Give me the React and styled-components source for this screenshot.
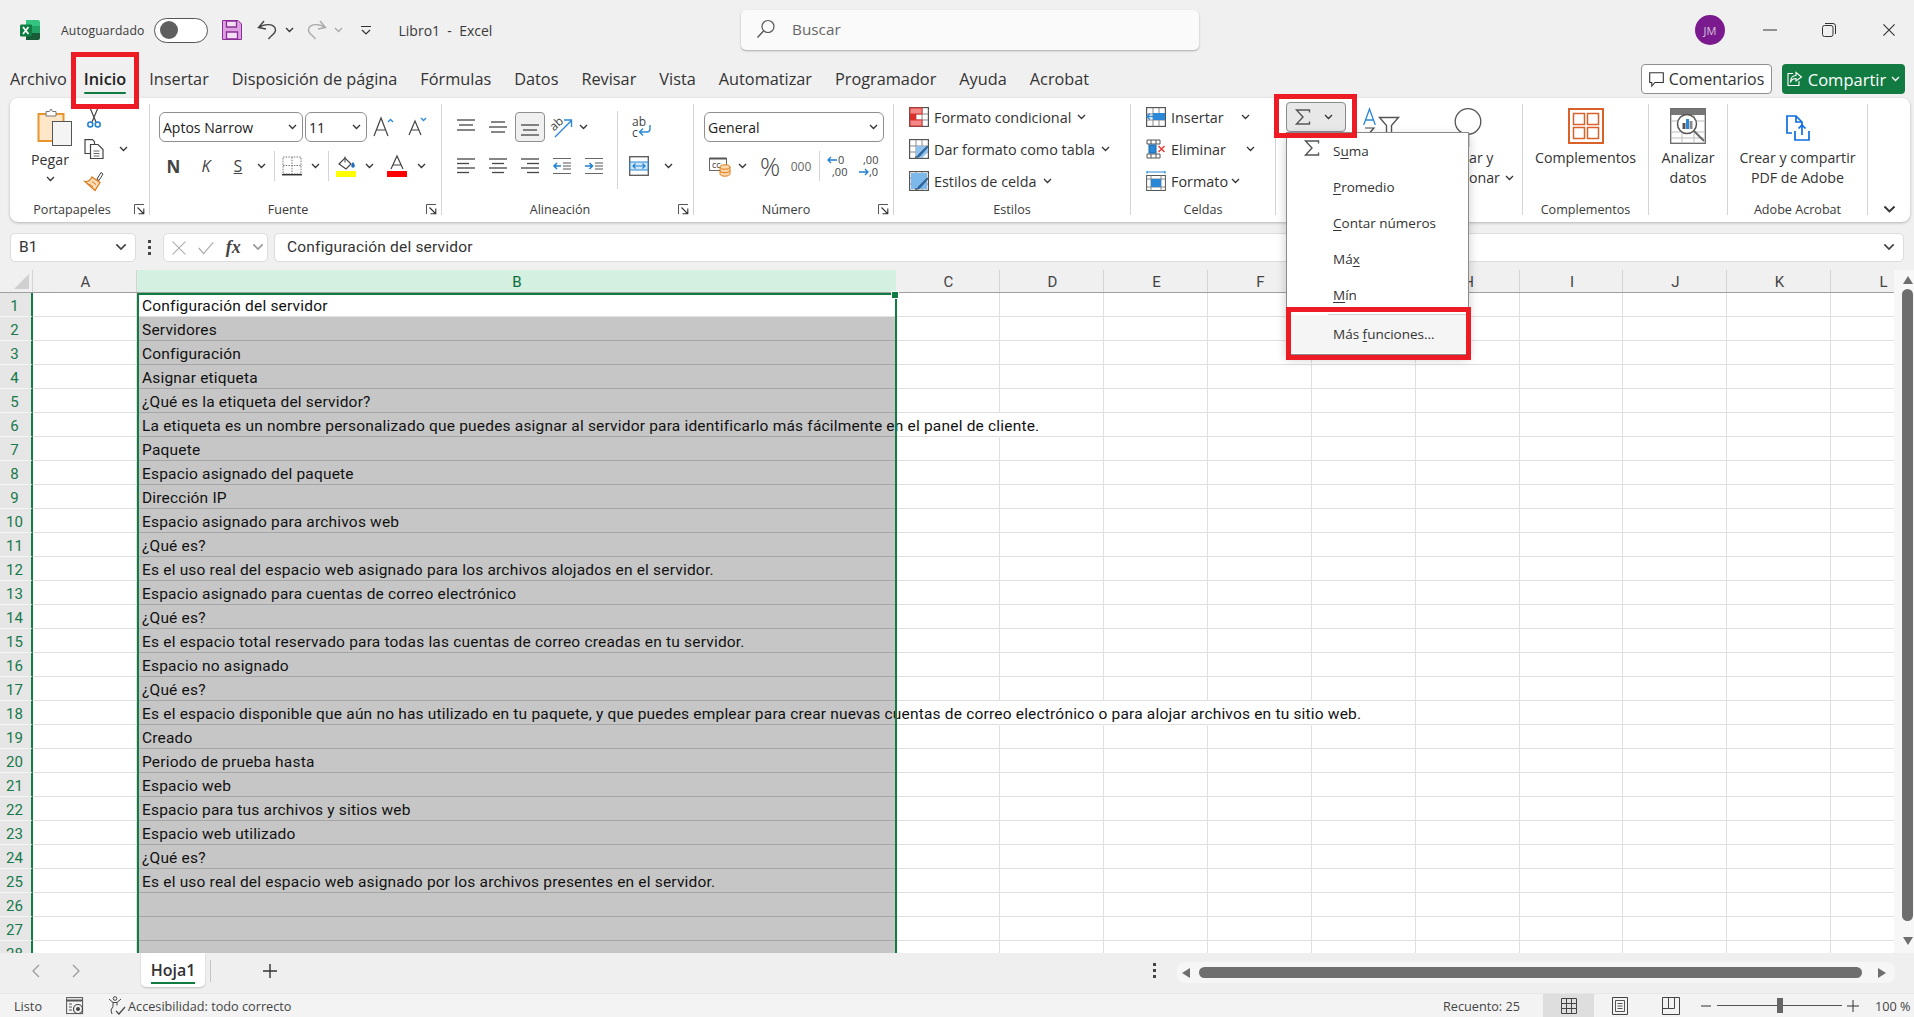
import styled, { createGlobalStyle } from "styled-components";

const UI = `"Open Sans", "Noto Sans", sans-serif`;
const CELL = `Roboto, "Liberation Sans", sans-serif`;
const GREEN = "#107c41";

const GlobalStyle = createGlobalStyle`
  html, body { margin: 0; padding: 0; background: #f0f0f0; }
  * { box-sizing: border-box; }
`;

const Page = styled.div`
  position: relative;
  width: 1914px;
  height: 1017px;
  overflow: hidden;
  background: #f0f0f0;
  color: #333;
  font-family: ${UI};
  display: flex;
  flex-direction: column;
`;

/* ---------- icons ---------- */
const Svg = ({ w, h = w, vb, children }) => (
  <svg width={w} height={h} viewBox={vb || `0 0 ${w} ${h}`} fill="none" overflow="visible">
    {children}
  </svg>
);

const Chevron = ({ c = "#333", s = 9 }) => (
  <Svg w={s} h={s * 0.67} vb="0 0 9 6">
    <path d="M1 1l3.5 3.5L8 1" stroke={c} strokeWidth="1.3" />
  </Svg>
);

const ExcelLogo = () => (
  <Svg w={20}>
    <path d="M6 0h12a2 2 0 0 1 2 2v4H6z" fill="#33c481" />
    <path d="M6 6h14v7H6z" fill="#21a366" />
    <path d="M6 13h14v5a2 2 0 0 1-2 2H6z" fill="#185c37" />
    <rect x="0" y="4.5" width="12" height="12" rx="1.2" fill={GREEN} />
    <path d="M3 7l5.5 7M8.5 7L3 14" stroke="#fff" strokeWidth="1.7" />
  </Svg>
);

const SaveIcon = () => (
  <Svg w={20}>
    <path d="M.5.5h15.5l3.5 3.5v15.5H.5z" fill="#dc9fdf" stroke="#8a2c97" />
    <path d="M4.5 1h10v6h-10zM4.5 12h11v7h-11z" fill="#f3dff4" stroke="#8a2c97" strokeWidth="1.3" />
  </Svg>
);

const UndoIcon = ({ c = "#444" }) => (
  <Svg w={20}>
    <path d="M7 1L1.5 7.5l7.5 1.5M2 7.5C7 3.5 18 3 18.5 10c.2 3.5-5 6-7 9" stroke={c} strokeWidth="1.4" />
  </Svg>
);

const RedoIcon = () => (
  <Svg w={20}>
    <path d="M13 1l5.5 6.5L11 9M18 7.5C13 3.5 2 3 1.5 10c-.2 3.5 5 6 7 9" stroke="#a9a9a9" strokeWidth="1.4" />
  </Svg>
);

const CustomizeIcon = () => (
  <Svg w={12}>
    <path d="M1 2.5h10M2 6l4 4 4-4" stroke="#333" strokeWidth="1.2" />
  </Svg>
);

const SearchIcon = () => (
  <Svg w={20}>
    <circle cx="12" cy="7.5" r="6" stroke="#555" strokeWidth="1.2" />
    <path d="M7.5 12L1.5 18.5" stroke="#555" strokeWidth="1.3" />
  </Svg>
);

const CommentIcon = () => (
  <Svg w={15}>
    <path d="M.7.7h13.6v9.8H6L2.8 14v-3.5H.7z" stroke="#333" strokeWidth="1.1" />
  </Svg>
);

const ShareIcon = () => (
  <Svg w={16}>
    <path d="M9 1.5l5.5 4.5L9 10V7.5C5.5 7.5 4 9.5 3.5 11.5 3.5 6.5 6 4.5 9 4.5z" stroke="#fff" strokeWidth="1.1" />
    <path d="M6 2.5H1v12h11V10" stroke="#fff" strokeWidth="1.1" />
  </Svg>
);

const PasteIcon = () => (
  <Svg w={35} h={38}>
    <rect x="1.5" y="6" width="25" height="27" fill="#fde7c8" stroke="#e9952f" strokeWidth="2" />
    <path d="M9 6V3.5h3.5L14 1l1.5 2.5H19V8H9z" fill="#fff" stroke="#777" />
    <rect x="15.5" y="13.5" width="19" height="24" fill="#f4f4f4" stroke="#555" />
  </Svg>
);

const ScissorsIcon = () => (
  <Svg w={14} h={20}>
    <path d="M3.5 1l5.5 13M10.5 1L5 14" stroke="#444" strokeWidth="1.2" />
    <circle cx="3.3" cy="16.5" r="2.5" stroke="#1f7fd0" strokeWidth="1.5" />
    <circle cx="10.7" cy="16.5" r="2.5" stroke="#1f7fd0" strokeWidth="1.5" />
  </Svg>
);

const CopyIcon = () => (
  <Svg w={20}>
    <path d="M7 14.5H1V.7h7.5l2 2v3" stroke="#444" strokeWidth="1.2" />
    <path d="M6.5 5.5H14l5 5v9H6.5z" fill="#fff" stroke="#444" strokeWidth="1.2" />
    <path d="M9.5 12h6M9.5 14.5h6M9.5 17h6" stroke="#666" />
  </Svg>
);

const BrushIcon = () => (
  <Svg w={20}>
    <path d="M13 8l4-6.5 2 1.5-4 6.5z" stroke="#444" />
    <path d="M8 6l8 5.5-5 8L1 10.5c3 .3 5.5-1.5 7-4.5z" fill="#fbdcb4" stroke="#dd7a1c" strokeWidth="1.3" />
    <path d="M5 13l4 3M8 10.5l4 3" stroke="#dd7a1c" />
  </Svg>
);

const GrowIcon = ({ shrink }) => (
  <Svg w={20} h={22}>
    <path d={shrink ? "M1 19L7 5l6 14M3.2 14h7.6" : "M0 20L7 2l7 18M2.6 14h8.8"} stroke="#444" strokeWidth="1.2" />
    <path d={shrink ? "M13 2l2.5 2.5L18 2" : "M14 6l2.5-2.5L19 6"} stroke="#2b88d8" strokeWidth="1.3" />
  </Svg>
);

const BordersIcon = () => (
  <Svg w={20}>
    <path d="M1 1h18v17H1zM10 1v17M1 9.5h18" stroke="#777" strokeDasharray="1.5 1.2" />
    <path d="M0 18.7h20" stroke="#333" strokeWidth="1.5" />
  </Svg>
);

const FillIcon = () => (
  <Svg w={20} h={22}>
    <path d="M3 9l6-6 6 6-5 5z" stroke="#444" strokeWidth="1.2" />
    <path d="M9 1.5v6" stroke="#444" />
    <path d="M17 7c-1.5 2-1.8 3-1.8 4a1.8 1.8 0 0 0 3.6 0c0-1-.3-2-1.8-4z" fill="#1f6fc0" />
    <rect y="16" width="20" height="6" fill="#ffff00" />
  </Svg>
);

const FontColorIcon = () => (
  <Svg w={20} h={22}>
    <path d="M4 14L10 1l6 13M6 10h8" stroke="#444" strokeWidth="1.2" />
    <rect y="16" width="20" height="6" fill="#ff0000" />
  </Svg>
);

const AlignLines = ({ lines }) => (
  <Svg w={18} h={18}>
    {lines.map(([a, b, y], i) => (
      <path key={i} d={`M${a} ${y}H${b}`} stroke="#444" strokeWidth="1.3" />
    ))}
  </Svg>
);

const IndentIcon = ({ right }) => (
  <Svg w={18} h={18}>
    <path d="M0 1.5h18M0 16.5h18" stroke="#666" strokeWidth="1.2" />
    <path d={right ? "M0 9h7M4.5 6L7.5 9l-3 3" : "M8 9H1M4 6L1 9l3 3"} stroke="#1f7fd0" strokeWidth="1.5" />
    <path d="M10 6h8M10 9h8M10 12h8" stroke="#555" />
  </Svg>
);

const OrientIcon = () => (
  <Svg w={22} h={22}>
    <text x="0" y="12" fontFamily={UI} fontSize="12" fill="#444" transform="rotate(-42 6 10)">ab</text>
    <path d="M4 21L20 5M13 4h7.5v7" stroke="#2b88d8" strokeWidth="1.4" />
  </Svg>
);

const WrapIcon = () => (
  <Svg w={20} h={22}>
    <text fontFamily={UI} fontSize="12" fill="#444">
      <tspan x="0" y="10">ab</tspan>
      <tspan x="0" y="21">c</tspan>
    </text>
    <path d="M18 9v4a3 3 0 0 1-3 3H8M11 12.5L7.5 16l3.5 3.5" stroke="#2b88d8" strokeWidth="1.4" />
  </Svg>
);

const MergeIcon = () => (
  <Svg w={20}>
    <rect x=".7" y=".7" width="18.6" height="18.6" fill="#fff" stroke="#555" strokeWidth="1.3" />
    <rect x="1" y="6" width="18" height="8" fill="#cfe6f8" stroke="#2b88d8" />
    <path d="M4 10h12M6.5 7.5L4 10l2.5 2.5M13.5 7.5L16 10l-2.5 2.5" stroke="#1f7fd0" strokeWidth="1.2" />
  </Svg>
);

const CurrencyIcon = () => (
  <Svg w={22} h={22}>
    <rect x=".5" y="3.5" width="17" height="12" fill="#fff" stroke="#666" />
    <path d="M.5 3.5h17" stroke="#555" strokeWidth="2" />
    <text x="3" y="13" fontFamily={UI} fontSize="9" fill="#444">cc</text>
    <path d="M11 12v7c0 1.2 2.2 2.2 5 2.2s5-1 5-2.2v-7M11 15.5c0 1.2 2.2 2.2 5 2.2s5-1 5-2.2" fill="#fbd9ae" stroke="#e07b16" />
    <ellipse cx="16" cy="12" rx="5" ry="2.2" fill="#fbd9ae" stroke="#e07b16" />
  </Svg>
);

const DecimalIcon = ({ more }) => (
  <Svg w={21} h={24}>
    {more ? (
      <>
        <path d="M10 6H1M4 3L1 6l3 3" stroke="#1f7fd0" strokeWidth="1.3" />
        <text fontFamily={UI} fontSize="11" fill="#444">
          <tspan x="11" y="10">0</tspan>
          <tspan x="5" y="22">,00</tspan>
        </text>
      </>
    ) : (
      <>
        <path d="M1 18h9M7 15l3 3-3 3" stroke="#1f7fd0" strokeWidth="1.3" />
        <text fontFamily={UI} fontSize="11" fill="#444">
          <tspan x="5" y="10">,00</tspan>
          <tspan x="11" y="22">,0</tspan>
        </text>
      </>
    )}
  </Svg>
);

const CellGrid = ({ children, brush }) => (
  <Svg w={20}>
    <rect x=".6" y=".6" width="18.8" height="18.8" fill="#fff" stroke="#555" strokeWidth="1.2" />
    <path d="M7 1v18M13 1v18M1 7h18M1 13h18" stroke="#888" />
    {children}
    {brush && <path d="M6 18c2 0 3-1 3.5-2.5L18 7l1 1-8 9c-1.5 1.5-3 1.5-5 1z" fill="#1f6fc0" stroke="#444" strokeWidth=".6" />}
  </Svg>
);

const CondIcon = () => (
  <CellGrid>
    <rect x="1" y="1" width="12" height="6" fill="#f28a8a" stroke="#d9302a" />
    <rect x="1" y="13" width="12" height="6" fill="#f28a8a" stroke="#d9302a" />
    <rect x="1" y="7" width="6" height="6" fill="#d9302a" />
  </CellGrid>
);
const TableIcon = () => (
  <CellGrid brush>
    <path d="M7 7h12v6l-6 6H7z" fill="#8fc3ee" />
  </CellGrid>
);
const StyleIcon = () => (
  <CellGrid brush>
    <rect x="2" y="2" width="16" height="16" fill="#7db8ea" />
  </CellGrid>
);
const InsertIcon = () => (
  <CellGrid>
    <rect x="7" y="6" width="12" height="7" fill="#2b88d8" />
    <path d="M9 9.5H1M4 6.5L1 9.5l3 3" stroke="#2b88d8" strokeWidth="1.3" />
  </CellGrid>
);
const DeleteIcon = () => (
  <Svg w={20}>
    <path d="M1 1h13v4H1zM1 15h13v4H1zM5 1v4M10 1v4M5 15v4M10 15v4" stroke="#555" />
    <rect x="3" y="6" width="7" height="8" fill="#2b88d8" stroke="#1a64a8" />
    <path d="M12.5 7l6 6M18.5 7l-6 6" stroke="#e8403a" strokeWidth="1.5" />
  </Svg>
);
const FormatIcon = () => (
  <Svg w={20}>
    <path d="M1 1h18M1 0v2.5M19 0v2.5" stroke="#2b88d8" strokeWidth="1.2" />
    <rect x=".6" y="4.5" width="18.8" height="15" fill="#fff" stroke="#555" />
    <path d="M5 4.5v15M15 4.5v15M1 8h18M1 16h18" stroke="#888" />
    <rect x="5" y="8" width="10" height="8" fill="#2b88d8" />
  </Svg>
);

const SigmaIcon = ({ s = 16 }) => (
  <Svg w={s} h={s} vb="0 0 16 16">
    <path d="M14.5 3.5V1H1.5l6.500 7-6.500 7h13v-2.500" stroke="#555" strokeWidth="1.4" />
  </Svg>
);

const SortIcon = () => (
  <Svg w={38} h={36}>
    <path d="M.7 19L6.500 3l5.800 16M2.600 14h7.800" stroke="#2b88d8" strokeWidth="1.3" />
    <path d="M2 22h9l-9 10h9" stroke="#444" strokeWidth="1.2" />
    <path d="M16.5 11.5h19l-7 8v10h-5v-10z" fill="#fff" stroke="#555" strokeWidth="1.4" />
  </Svg>
);

const FindIcon = () => (
  <Svg w={28} h={40}>
    <circle cx="14" cy="13.5" r="12.8" fill="#fff" stroke="#555" strokeWidth="1.3" />
    <path d="M14 26.5V39" stroke="#555" strokeWidth="2.5" />
  </Svg>
);

const AddinsIcon = () => (
  <Svg w={36}>
    <rect x="1" y="1" width="34" height="34" fill="#fff" stroke="#d9622b" strokeWidth="2" />
    <rect x="5.5" y="5.5" width="11" height="11" fill="#fff" stroke="#d9622b" strokeWidth="1.5" />
    <rect x="19.5" y="5.5" width="11" height="11" fill="#fff" stroke="#d9622b" strokeWidth="1.5" />
    <rect x="5.5" y="19.5" width="11" height="11" fill="#fff" stroke="#d9622b" strokeWidth="1.5" />
    <rect x="19.5" y="19.5" width="11" height="11" fill="#fff" stroke="#d9622b" strokeWidth="1.5" />
  </Svg>
);

const AnalyzeIcon = () => (
  <Svg w={36}>
    <rect x=".7" y=".7" width="34.6" height="34.6" fill="#fff" stroke="#666" strokeWidth="1.3" />
    <rect x="1" y="1" width="34" height="6" fill="#777" />
    <path d="M12 7v28M24 7v28M1 13h34M1 24h34M1 30h34" stroke="#bbb" />
    <circle cx="17" cy="16" r="9.5" fill="#fff" stroke="#555" strokeWidth="1.5" />
    <path d="M24 23l10 10" stroke="#666" strokeWidth="2" />
    <rect x="12.5" y="15" width="3" height="6" fill="#555" />
    <rect x="16" y="11" width="3" height="10" fill="#2b88d8" />
    <rect x="19.5" y="13" width="3" height="8" fill="#8a8a8a" />
  </Svg>
);

const AdobeIcon = () => (
  <Svg w={24} h={26}>
    <path d="M6 18H1V1h9l6 6v4M10 1v6h6" stroke="#0f6fe0" strokeWidth="1.7" />
    <path d="M9 16v9h14v-9M16 20V10M12.5 13.5L16 10l3.5 3.5" stroke="#0f6fe0" strokeWidth="1.7" />
  </Svg>
);

const Launcher = () => (
  <Svg w={11}>
    <path d="M.5 10V.5H10" stroke="#555" />
    <path d="M3.5 3.5l6 6M4.5 9.8h5.300V4.5" stroke="#333" strokeWidth="1.1" />
  </Svg>
);

const XMark = ({ s = 20, c = "#aaa", w = 1.3 }) => (
  <Svg w={s} vb="0 0 20 20">
    <path d="M2 2l16 16M18 2L2 18" stroke={c} strokeWidth={w} />
  </Svg>
);

const MacroIcon = () => (
  <Svg w={18}>
    <rect x=".6" y=".6" width="16" height="16" stroke="#555" />
    <path d="M.6 3.5h16" stroke="#555" strokeWidth="2" />
    <path d="M3 7h3M3 10h3M3 13h3" stroke="#555" />
    <circle cx="12" cy="12" r="4.5" fill="#f3f3f3" stroke="#444" strokeWidth="1.2" />
    <circle cx="12" cy="12" r="2" fill="#444" />
  </Svg>
);

const AccessIcon = () => (
  <Svg w={18} h={20}>
    <circle cx="7" cy="2.5" r="1.8" stroke="#444" />
    <path d="M1 3l4 3.5h4L13 3M5 6.5v4L3 14l1 4M9 6.5v3" stroke="#444" />
    <path d="M8 15l3 3 6-7" stroke="#444" strokeWidth="1.2" />
  </Svg>
);

const NormalViewIcon = () => (
  <Svg w={16}>
    <path d="M.5.5h15v15H.5zM5.5.5v15M10.5.5v15M.5 5.5h15M.5 10.5h15" stroke="#444" />
  </Svg>
);
const PageViewIcon = () => (
  <Svg w={16} h={18}>
    <path d="M.5.5h15v17H.5z" stroke="#444" />
    <path d="M3.5 3.5h9v11h-9zM5.5 6.5h5M5.5 9h5M5.5 11.5h5" stroke="#555" />
  </Svg>
);
const BreakViewIcon = () => (
  <Svg w={18} h={18}>
    <path d="M.5.5h17v17H.5zM.5 11.5h6V.5M6.5 11.5h6V.5" stroke="#444" />
  </Svg>
);

/* ---------- title bar ---------- */
const TitleBar = styled.header`
  height: 60px;
  flex: none;
  display: flex;
  align-items: center;
`;
const TitleLeft = styled.div`
  width: 741px;
  flex: none;
  display: flex;
  align-items: center;
  padding-left: 20px;
`;
const TitleItem = styled.span`
  display: inline-flex;
  align-items: center;
  margin-left: ${(p) => p.$ml || 0}px;
`;
const AutoSave = styled.span`
  margin-left: 21px;
  font-size: 12.2px;
  letter-spacing: 0.15px;
  color: #3a3a3a;
`;
const Toggle = styled.span`
  margin-left: 9px;
  width: 54px;
  height: 25px;
  border: 1px solid #555;
  border-radius: 13px;
  background: #fff;
  display: flex;
  align-items: center;
  padding-left: 5px;
  &::before {
    content: "";
    width: 18px;
    height: 18px;
    border-radius: 50%;
    background: #5f5f5f;
  }
`;
const DocTitle = styled.span`
  margin-left: 27px;
  font-size: 14px;
  color: #3a3a3a;
  white-space: pre;
`;
const SearchBox = styled.div`
  width: 458px;
  height: 40px;
  flex: none;
  background: #fafafa;
  border-radius: 5px;
  box-shadow: 0 1px 2px rgba(0, 0, 0, 0.3);
  display: flex;
  align-items: center;
  gap: 16px;
  padding: 0 0 2px 15px;
  font-size: 15.3px;
  color: #666;
`;
const TitleRight = styled.div`
  flex: 1;
  display: flex;
  align-items: center;
  justify-content: flex-end;
`;
const Avatar = styled.span`
  width: 30px;
  height: 30px;
  border-radius: 50%;
  background: #7a1a8e;
  color: #d9c2de;
  font-size: 11px;
  display: flex;
  align-items: center;
  justify-content: center;
  margin-right: 15px;
`;
const WinButton = styled.span`
  width: ${(p) => p.$w}px;
  height: 40px;
  margin-left: ${(p) => p.$ml || 0}px;
  display: flex;
  align-items: center;
  justify-content: center;
`;

/* ---------- tab row ---------- */
const TabRow = styled.nav`
  height: 38px;
  flex: none;
  display: flex;
  align-items: center;
  padding: 0 9px 0 10px;
`;
const Tab = styled.span`
  position: relative;
  margin-right: ${(p) => p.$mr ?? 23}px;
  font-size: 16.3px;
  font-weight: ${(p) => (p.$active ? 600 : 400)};
  color: ${(p) => (p.$active ? "#222" : "#333")};
  white-space: nowrap;
  ${(p) =>
    p.$active &&
    `&::after {
      content: "";
      position: absolute;
      left: 0;
      right: 0;
      bottom: -4px;
      height: 2.5px;
      background: ${GREEN};
      border-radius: 2px;
    }`}
`;
const TabSpacer = styled.span`
  flex: 1;
`;
const CommentButton = styled.span`
  width: 131px;
  height: 30px;
  display: flex;
  align-items: center;
  justify-content: center;
  gap: 5px;
  background: #fff;
  border: 1px solid #8f8f8f;
  border-radius: 4px;
  font-size: 16px;
`;
const ShareButton = styled.span`
  width: 123px;
  height: 30px;
  margin-left: 10px;
  display: flex;
  align-items: center;
  justify-content: center;
  gap: 5px;
  background: #127b42;
  border-radius: 4px;
  color: #fff;
  font-size: 16.5px;
`;

/* ---------- ribbon ---------- */
const Ribbon = styled.section`
  height: 124px;
  flex: none;
  margin: 0 4px 0 10px;
  padding-top: 6px;
  display: flex;
  background: #fff;
  border-radius: 8px;
  box-shadow: 0 1px 3px rgba(0, 0, 0, 0.25);
`;
const Group = styled.div`
  width: ${(p) => p.$w}px;
  height: 111px;
  flex: ${(p) => (p.$w ? "none" : 1)};
  display: flex;
  flex-direction: column;
  border-right: ${(p) => (p.$last ? "none" : "1px solid #d4d4d4")};
`;
const GroupBody = styled.div`
  height: 97px;
  flex: none;
  display: flex;
  margin-top: ${(p) => p.$top || 0}px;
  margin-bottom: ${(p) => -(p.$top || 0)}px;
  padding-left: ${(p) => p.$left || 0}px;
`;
const GroupFoot = styled.div`
  height: 20px;
  display: flex;
  align-items: center;
  padding-right: ${(p) => (p.$launcher ? 4 : 0)}px;
`;
const GroupLabel = styled.span`
  flex: 1;
  text-align: center;
  font-size: 12.6px;
  color: #3a3a3a;
`;
const Stack = styled.div`
  width: ${(p) => (p.$w ? `${p.$w}px` : "auto")};
  flex: none;
  display: flex;
  flex-direction: column;
  padding-top: ${(p) => p.$top || 0}px;
  margin-top: ${(p) => p.$mt || 0}px;
  gap: ${(p) => p.$gap || 0}px;
`;
const Line = styled.div`
  display: flex;
  align-items: center;
  height: ${(p) => p.$h || 30}px;
`;
const Slot = styled.span`
  width: ${(p) => p.$w}px;
  height: 100%;
  flex: none;
  display: inline-flex;
  align-items: center;
  justify-content: center;
  margin-left: ${(p) => p.$ml || 0}px;
  ${(p) =>
    p.$on &&
    `
    height: 30px;
    background: #f0f0f0;
    border: 1px solid #8f8f8f;
    border-radius: 4px;
  `}
`;
const BigCol = styled.div`
  width: ${(p) => p.$w}px;
  flex: none;
  display: flex;
  flex-direction: column;
  align-items: center;
  padding-top: 4px;
  margin-top: ${(p) => p.$mt || 0}px;
  margin-left: ${(p) => p.$ml || 0}px;
`;
const BigIcon = styled.div`
  height: ${(p) => p.$h || 40}px;
  flex: none;
  display: flex;
  align-items: flex-start;
  justify-content: center;
  padding-top: ${(p) => p.$top || 0}px;
  padding-left: ${(p) => p.$left || 0}px;
`;
const BigLabel = styled.span`
  font-size: 14.2px;
  line-height: 20px;
  height: ${(p) => p.$h || 20}px;
  color: #333;
  white-space: nowrap;
  display: inline-flex;
  align-items: center;
  gap: 5px;
`;
const PeekLabels = styled.div`
  align-self: flex-start;
  margin-left: ${(p) => p.$ml}px;
  display: flex;
  flex-direction: column;
`;
const Select = styled.div`
  width: ${(p) => p.$w}px;
  height: 30px;
  flex: none;
  margin-right: 2px;
  border: 1px solid #8f8f8f;
  border-radius: 6px;
  background: #fff;
  display: flex;
  align-items: center;
  justify-content: space-between;
  padding: 0 5px 0 3px;
  font-size: 14px;
  color: #222;
`;
const Letter = styled.span`
  font-size: ${(p) => p.$size || 15}px;
  font-weight: ${(p) => p.$weight || 400};
  font-style: ${(p) => (p.$italic ? "italic" : "normal")};
  text-decoration: ${(p) => (p.$under ? "underline" : "none")};
  color: ${(p) => p.$c || "#444"};
`;
const VRule = styled.span`
  width: 1px;
  height: ${(p) => p.$h || 30}px;
  flex: none;
  margin-left: ${(p) => p.$ml || 0}px;
  margin-top: ${(p) => p.$mt || 0}px;
  background: #d4d4d4;
`;
const MenuRow = styled.div`
  height: 32px;
  display: flex;
  align-items: center;
  font-size: 14.4px;
  color: #333;
  white-space: nowrap;
`;
const RowLabel = styled.span`
  margin-left: 5px;
`;
const RowChevron = styled.span`
  display: inline-flex;
  margin-left: ${(p) => p.$ml || 6}px;
`;
const SumButton = styled.div`
  width: 60px;
  height: 30px;
  flex: none;
  margin-left: 10px;
  display: flex;
  align-items: center;
  justify-content: space-between;
  padding: 0 12px 0 8px;
  background: #e8e8e8;
  border: 1px solid #8a8a8a;
  border-radius: 4px;
`;

/* ---------- dropdown ---------- */
const Dropdown = styled.div`
  position: absolute;
  left: 1286px;
  top: 132px;
  width: 183px;
  height: 223px;
  z-index: 5;
  background: #fff;
  border: 1px solid #8a8a8a;
  box-shadow: 0 4px 10px rgba(0, 0, 0, 0.2);
  display: flex;
  flex-direction: column;
`;
const DropItem = styled.div`
  height: 36px;
  flex: none;
  display: flex;
  align-items: center;
  padding-left: 46px;
  font-size: 13.5px;
  color: #333;
  position: relative;
  u {
    text-underline-offset: 2px;
  }
`;
const DropSigma = styled.span`
  position: absolute;
  left: 17px;
  top: 7px;
  display: flex;
`;
const DropRule = styled.div`
  height: 1px;
  margin: 1px 0 0 41px;
  background: #cfcfcf;
`;
const DropLast = styled(DropItem)`
  height: 38px;
  background: #f5f5f5;
`;

/* ---------- annotations ---------- */
const Mark = styled.div`
  position: absolute;
  z-index: 6;
  border: 5px solid #ed1c24;
  pointer-events: none;
`;
const InicioMark = styled(Mark)`
  left: 71px;
  top: 52px;
  width: 68px;
  height: 57px;
`;
const SumMark = styled(Mark)`
  left: 1274px;
  top: 94px;
  width: 83px;
  height: 44px;
`;
const MoreMark = styled(Mark)`
  left: 1286px;
  top: 307px;
  width: 185px;
  height: 53px;
`;

/* ---------- formula bar ---------- */
const FormulaBar = styled.div`
  height: 29px;
  flex: none;
  margin-top: 11px;
  padding: 0 10px;
  display: flex;
  align-items: center;
`;
const FormulaBox = styled.div`
  height: 29px;
  flex: ${(p) => (p.$w ? "none" : 1)};
  width: ${(p) => (p.$w ? `${p.$w}px` : "auto")};
  margin-left: ${(p) => p.$ml || 0}px;
  background: #fff;
  border: 1px solid #dcdcdc;
  border-radius: 5px;
  display: flex;
  align-items: center;
  justify-content: space-between;
  color: #333;
  padding: ${(p) => p.$pad || "0"};
`;
const BoxText = styled.span`
  flex: 1;
  padding-bottom: 2px;
  font-family: ${CELL};
  font-size: 15.5px;
  letter-spacing: 0.19px;
`;
const Dots = styled.span`
  width: 27px;
  flex: none;
  display: flex;
  flex-direction: column;
  align-items: center;
  gap: 3px;
  i {
    width: 3px;
    height: 3px;
    background: #444;
  }
`;
const TabDots = styled(Dots)`
  margin: 10px 0 0 auto;
`;
const FxText = styled.span`
  font-family: "Liberation Serif", serif;
  font-style: italic;
  font-weight: 700;
  font-size: 18px;
  color: #444;
`;

/* ---------- sheet ---------- */
const Sheet = styled.div`
  height: 683px;
  flex: none;
  margin-top: 8px;
  display: flex;
`;
const GridArea = styled.div`
  position: relative;
  width: 1894px;
  flex: none;
  overflow: hidden;
  background: #fff;
`;
const HeadRow = styled.div`
  height: 23px;
  display: flex;
  background: #f0f0f0;
  border-bottom: 1px solid #a0a0a0;
`;
const Corner = styled.div`
  width: 33px;
  flex: none;
  position: relative;
  border-right: 1px solid #d4d4d4;
  &::after {
    content: "";
    position: absolute;
    right: 3px;
    bottom: 3px;
    border-style: solid;
    border-width: 0 0 15px 15px;
    border-color: transparent transparent #d0d0d0 transparent;
  }
`;
const ColHead = styled.div`
  width: ${(p) => p.$w}px;
  flex: none;
  display: flex;
  align-items: center;
  justify-content: center;
  padding: 2px 0 0 2px;
  font-family: ${CELL};
  font-size: 15px;
  color: ${(p) => (p.$on ? "#0e6b3a" : "#444")};
  background: ${(p) => (p.$on ? "#d3f0e0" : "transparent")};
  border-right: 1px solid ${(p) => (p.$on ? "#d3f0e0" : "#d4d4d4")};
`;
const Row = styled.div`
  height: 24px;
  display: flex;
`;
const RowHead = styled.div`
  width: 33px;
  flex: none;
  display: flex;
  align-items: center;
  justify-content: center;
  padding: 2px 2px 0 0;
  font-family: ${CELL};
  font-size: 15px;
  color: #17794a;
  background: #e6e6e6;
  border-bottom: 1px solid #f4f4f4;
  border-right: 2px solid ${GREEN};
`;
const Cell = styled.div`
  width: ${(p) => p.$w}px;
  flex: none;
  position: relative;
  border-bottom: 1px solid ${(p) => (p.$sel ? "#a6a6a6" : "#e0e0e0")};
  border-right: 1px solid ${(p) => (p.$spill ? "transparent" : "#e0e0e0")};
  background: ${(p) => (p.$sel ? "#c6c6c6" : "#fff")};
`;
const CellText = styled.span`
  position: absolute;
  left: 5px;
  top: 1px;
  line-height: 24px;
  z-index: 1;
  white-space: nowrap;
  font-family: ${CELL};
  font-size: 15.5px;
  letter-spacing: 0.19px;
  color: #111;
`;
const Selection = styled.div`
  position: absolute;
  left: 137px;
  top: 23px;
  width: 760px;
  height: 670px;
  z-index: 2;
  border: 2px solid ${GREEN};
  border-bottom: none;
  pointer-events: none;
  &::after {
    content: "";
    position: absolute;
    right: -4px;
    top: -4px;
    width: 6px;
    height: 6px;
    background: ${GREEN};
    border: 1px solid #fff;
  }
`;
const VScroll = styled.div`
  flex: 1;
  padding: 6px 1px 6px 8px;
  display: flex;
  flex-direction: column;
  align-items: center;
  background: #f7f7f7;
`;
const ArrowUp = styled.span`
  flex: none;
  width: 0;
  height: 0;
  border-style: solid;
  border-width: 0 5.5px 8px;
  border-color: transparent transparent #6e6e6e;
`;
const ArrowDown = styled.span`
  flex: none;
  width: 0;
  height: 0;
  margin-top: 16px;
  border-style: solid;
  border-width: 8px 5.5px 0;
  border-color: #6e6e6e transparent transparent;
`;
const VThumb = styled.span`
  width: 11px;
  height: 632px;
  margin-top: 5px;
  flex: none;
  background: #6e6e6e;
  border-radius: 6px;
`;

/* ---------- sheet tabs ---------- */
const TabBar = styled.div`
  height: 40px;
  flex: none;
  display: flex;
  align-items: flex-start;
  background: #efefef;
`;
const SheetNav = styled.span`
  width: ${(p) => p.$w}px;
  height: 36px;
  flex: none;
  display: flex;
  align-items: center;
  justify-content: center;
  margin-left: ${(p) => p.$ml || 0}px;
`;
const SheetTab = styled.div`
  width: 64px;
  height: 34px;
  flex: none;
  margin-left: 50px;
  position: relative;
  background: #fff;
  border-radius: 0 0 5px 5px;
  box-shadow: 0 1px 2px rgba(0, 0, 0, 0.2);
  display: flex;
  align-items: center;
  justify-content: center;
  font-size: 16px;
  font-weight: 600;
  color: #333;
  &::after {
    content: "";
    position: absolute;
    left: 10px;
    right: 10px;
    bottom: 3px;
    height: 2px;
    background: ${GREEN};
  }
`;
const SheetRule = styled.span`
  width: 1px;
  height: 22px;
  margin: 7px 0 0 5px;
  flex: none;
  background: #c4c4c4;
`;
const HScroll = styled.div`
  width: 718px;
  height: 21px;
  margin: 9px 19px 0 9px;
  flex: none;
  display: flex;
  align-items: center;
  background: #f6f6f6;
  border-radius: 8px;
  padding: 0 5px;
`;
const HThumb = styled.span`
  width: 663px;
  height: 11px;
  margin: 0 16px 0 9px;
  flex: none;
  border-radius: 6px;
  background: #6e6e6e;
`;
const ArrowLeft = styled.span`
  flex: none;
  width: 0;
  height: 0;
  border-style: solid;
  border-width: 5.5px 8px 5.5px 0;
  border-color: transparent #6e6e6e transparent transparent;
`;
const ArrowRight = styled.span`
  flex: none;
  width: 0;
  height: 0;
  border-style: solid;
  border-width: 5.5px 0 5.5px 8px;
  border-color: transparent transparent transparent #6e6e6e;
`;

/* ---------- status bar ---------- */
const StatusBar = styled.footer`
  height: 24px;
  flex: none;
  display: flex;
  align-items: center;
  padding-left: 14px;
  background: #f3f3f3;
  border-top: 1px solid #e6e6e6;
  font-size: 12.7px;
  color: #444;
`;
const StatusIcon = styled.span`
  display: inline-flex;
  margin-left: ${(p) => p.$ml || 0}px;
`;
const StatusRight = styled.div`
  margin-left: auto;
  display: flex;
  align-items: center;
  height: 100%;
`;
const Recount = styled.span`
  margin-right: 23px;
`;
const ViewButton = styled.span`
  width: 51px;
  height: 100%;
  display: flex;
  align-items: center;
  justify-content: center;
  background: ${(p) => (p.$on ? "#dedede" : "transparent")};
`;
const ZoomMinus = styled.span`
  display: inline-flex;
  margin-left: 5px;
`;
const ZoomTrack = styled.span`
  position: relative;
  width: 125px;
  height: 1px;
  margin: 0 5px 0 6px;
  background: #555;
  &::after {
    content: "";
    position: absolute;
    left: 60px;
    top: -7px;
    width: 6px;
    height: 15px;
    background: #666;
  }
`;
const ZoomValue = styled.span`
  width: 39px;
  margin-left: 16px;
  white-space: nowrap;
`;

const tabs = ["Insertar", "Disposición de página", "Fórmulas", "Datos", "Revisar", "Vista", "Automatizar", "Programador", "Ayuda", "Acrobat"];

const columns = [
  { name: "A", w: 104 },
  { name: "B", w: 759, on: true },
  { name: "C", w: 104 },
  { name: "D", w: 104 },
  { name: "E", w: 104 },
  { name: "F", w: 104 },
  { name: "G", w: 104 },
  { name: "H", w: 104 },
  { name: "I", w: 103 },
  { name: "J", w: 104 },
  { name: "K", w: 104 },
  { name: "L", w: 104 },
];

const rows = [
  "Configuración del servidor",
  "Servidores",
  "Configuración",
  "Asignar etiqueta",
  "¿Qué es la etiqueta del servidor?",
  "La etiqueta es un nombre personalizado que puedes asignar al servidor para identificarlo más fácilmente en el panel de cliente.",
  "Paquete",
  "Espacio asignado del paquete",
  "Dirección IP",
  "Espacio asignado para archivos web",
  "¿Qué es?",
  "Es el uso real del espacio web asignado para los archivos alojados en el servidor.",
  "Espacio asignado para cuentas de correo electrónico",
  "¿Qué es?",
  "Es el espacio total reservado para todas las cuentas de correo creadas en tu servidor.",
  "Espacio no asignado",
  "¿Qué es?",
  "Es el espacio disponible que aún no has utilizado en tu paquete, y que puedes emplear para crear nuevas cuentas de correo electrónico o para alojar archivos en tu sitio web.",
  "Creado",
  "Periodo de prueba hasta",
  "Espacio web",
  "Espacio para tus archivos y sitios web",
  "Espacio web utilizado",
  "¿Qué es?",
  "Es el uso real del espacio web asignado por los archivos presentes en el servidor.",
  "",
  "",
  "",
];

// cells after B whose right gridline is hidden by a long text
const spills = { 5: 1, 17: 4 };

const topAlign = [[0, 18, 2], [2, 16, 7], [0, 18, 12]];
const midAlign = [[2, 16, 4], [0, 18, 9], [2, 16, 14]];
const botAlign = [[0, 18, 7], [2, 16, 12], [0, 18, 17]];
const leftAlign = [[0, 18, 2], [0, 12, 6.5], [0, 18, 11], [0, 12, 15.5]];
const centerAlign = [[0, 18, 2], [3, 15, 6.5], [0, 18, 11], [3, 15, 15.5]];
const rightAlign = [[0, 18, 2], [6, 18, 6.5], [0, 18, 11], [6, 18, 15.5]];

const Clipboard = () => (
  <Group $w={140}>
    <GroupBody>
      <BigCol $w={56} $ml={12}>
        <BigIcon $h={42} $left={8}>
          <PasteIcon />
        </BigIcon>
        <BigLabel>Pegar</BigLabel>
        <BigLabel $h={18}>
          <Chevron />
        </BigLabel>
      </BigCol>
      <Stack $w={62} $mt={-2}>
        <Line $h={31}>
          <Slot $w={32}>
            <ScissorsIcon />
          </Slot>
        </Line>
        <Line $h={32}>
          <Slot $w={32}>
            <CopyIcon />
          </Slot>
          <Slot $w={26}>
            <Chevron />
          </Slot>
        </Line>
        <Line $h={31}>
          <Slot $w={32}>
            <BrushIcon />
          </Slot>
        </Line>
      </Stack>
    </GroupBody>
    <GroupFoot $launcher>
      <GroupLabel>Portapapeles</GroupLabel>
      <Launcher />
    </GroupFoot>
  </Group>
);

const FontGroup = () => (
  <Group $w={292}>
    <GroupBody $left={9}>
      <Stack $top={8} $gap={9}>
        <Line>
          <Select $w={144}>
            Aptos Narrow
            <Chevron />
          </Select>
          <Select $w={62}>
            11
            <Chevron />
          </Select>
          <Slot $w={24} $ml={3}>
            <GrowIcon />
          </Slot>
          <Slot $w={24} $ml={10}>
            <GrowIcon shrink />
          </Slot>
        </Line>
        <Line>
          <Slot $w={29}>
            <Letter $weight={700} $size={17}>N</Letter>
          </Slot>
          <Slot $w={36}>
            <Letter $italic $size={16}>K</Letter>
          </Slot>
          <Slot $w={28}>
            <Letter $under $size={16}>S</Letter>
          </Slot>
          <Slot $w={18}>
            <Chevron />
          </Slot>
          <VRule $ml={4} />
          <Slot $w={33}>
            <BordersIcon />
          </Slot>
          <Slot $w={14}>
            <Chevron />
          </Slot>
          <VRule $ml={6} />
          <Slot $w={34}>
            <FillIcon />
          </Slot>
          <Slot $w={12}>
            <Chevron />
          </Slot>
          <Slot $w={38} $ml={3}>
            <FontColorIcon />
          </Slot>
          <Slot $w={10}>
            <Chevron />
          </Slot>
        </Line>
      </Stack>
    </GroupBody>
    <GroupFoot $launcher>
      <GroupLabel>Fuente</GroupLabel>
      <Launcher />
    </GroupFoot>
  </Group>
);

const AlignGroup = () => (
  <Group $w={252}>
    <GroupBody $left={8}>
      <Stack $top={8} $gap={9} $w={167}>
        <Line>
          <Slot $w={32}>
            <AlignLines lines={topAlign} />
          </Slot>
          <Slot $w={32}>
            <AlignLines lines={midAlign} />
          </Slot>
          <Slot $w={30} $ml={1} $on>
            <AlignLines lines={botAlign} />
          </Slot>
          <Slot $w={32} $ml={1}>
            <OrientIcon />
          </Slot>
          <Slot $w={10}>
            <Chevron />
          </Slot>
        </Line>
        <Line>
          <Slot $w={32}>
            <AlignLines lines={leftAlign} />
          </Slot>
          <Slot $w={32}>
            <AlignLines lines={centerAlign} />
          </Slot>
          <Slot $w={32}>
            <AlignLines lines={rightAlign} />
          </Slot>
          <Slot $w={32}>
            <IndentIcon />
          </Slot>
          <Slot $w={32}>
            <IndentIcon right />
          </Slot>
        </Line>
      </Stack>
      <VRule $h={78} $mt={7} />
      <Stack $top={8} $gap={9}>
        <Line>
          <Slot $w={32} $ml={8}>
            <WrapIcon />
          </Slot>
        </Line>
        <Line>
          <Slot $w={32} $ml={5}>
            <MergeIcon />
          </Slot>
          <Slot $w={20} $ml={3}>
            <Chevron />
          </Slot>
        </Line>
      </Stack>
    </GroupBody>
    <GroupFoot $launcher>
      <GroupLabel>Alineación</GroupLabel>
      <Launcher />
    </GroupFoot>
  </Group>
);

const NumberGroup = () => (
  <Group $w={200}>
    <GroupBody $left={10}>
      <Stack $top={8} $gap={9}>
        <Line>
          <Select $w={180}>
            General
            <Chevron />
          </Select>
        </Line>
        <Line>
          <Slot $w={31}>
            <CurrencyIcon />
          </Slot>
          <Slot $w={14}>
            <Chevron />
          </Slot>
          <Slot $w={42}>
            <Letter $size={25} $weight={300}>%</Letter>
          </Slot>
          <Slot $w={20}>
            <Letter $size={12} $c="#666">000</Letter>
          </Slot>
          <VRule $ml={8} />
          <Slot $w={34}>
            <DecimalIcon more />
          </Slot>
          <Slot $w={28}>
            <DecimalIcon />
          </Slot>
        </Line>
      </Stack>
    </GroupBody>
    <GroupFoot $launcher>
      <GroupLabel>Número</GroupLabel>
      <Launcher />
    </GroupFoot>
  </Group>
);

const StylesGroup = () => (
  <Group $w={237}>
    <GroupBody $left={15} $top={-3}>
      <Stack>
        <MenuRow>
          <CondIcon />
          <RowLabel>Formato condicional</RowLabel>
          <RowChevron>
            <Chevron />
          </RowChevron>
        </MenuRow>
        <MenuRow>
          <TableIcon />
          <RowLabel>Dar formato como tabla</RowLabel>
          <RowChevron>
            <Chevron />
          </RowChevron>
        </MenuRow>
        <MenuRow>
          <StyleIcon />
          <RowLabel>Estilos de celda</RowLabel>
          <RowChevron>
            <Chevron />
          </RowChevron>
        </MenuRow>
      </Stack>
    </GroupBody>
    <GroupFoot>
      <GroupLabel>Estilos</GroupLabel>
    </GroupFoot>
  </Group>
);

const CellsGroup = () => (
  <Group $w={145}>
    <GroupBody $left={15} $top={-3}>
      <Stack>
        <MenuRow>
          <InsertIcon />
          <RowLabel>Insertar</RowLabel>
          <RowChevron $ml={17}>
            <Chevron />
          </RowChevron>
        </MenuRow>
        <MenuRow>
          <DeleteIcon />
          <RowLabel>Eliminar</RowLabel>
          <RowChevron $ml={20}>
            <Chevron />
          </RowChevron>
        </MenuRow>
        <MenuRow>
          <FormatIcon />
          <RowLabel>Formato</RowLabel>
          <RowChevron $ml={3}>
            <Chevron />
          </RowChevron>
        </MenuRow>
      </Stack>
    </GroupBody>
    <GroupFoot>
      <GroupLabel>Celdas</GroupLabel>
    </GroupFoot>
  </Group>
);

const EditGroup = () => (
  <Group $w={247}>
    <GroupBody $top={-2}>
      <SumButton>
        <SigmaIcon />
        <Chevron />
      </SumButton>
      <BigCol $w={72}>
        <BigIcon>
          <SortIcon />
        </BigIcon>
      </BigCol>
      <BigCol $w={100} $mt={2}>
        <BigIcon>
          <FindIcon />
        </BigIcon>
        <PeekLabels $ml={51}>
          <BigLabel>ar y</BigLabel>
          <BigLabel>
            onar
            <Chevron />
          </BigLabel>
        </PeekLabels>
      </BigCol>
    </GroupBody>
    <GroupFoot />
  </Group>
);

const BigGroup = ({ w, icon, lines, label, top }) => (
  <Group $w={w}>
    <GroupBody>
      <BigCol $w={w - 1}>
        <BigIcon $top={top}>{icon}</BigIcon>
        {lines.map((l) => (
          <BigLabel key={l}>{l}</BigLabel>
        ))}
      </BigCol>
    </GroupBody>
    <GroupFoot>
      <GroupLabel>{label}</GroupLabel>
    </GroupFoot>
  </Group>
);

export default function App() {
  return (
    <Page>
      <GlobalStyle />
      <TitleBar>
        <TitleLeft>
          <ExcelLogo />
          <AutoSave>Autoguardado</AutoSave>
          <Toggle />
          <TitleItem $ml={14}>
            <SaveIcon />
          </TitleItem>
          <TitleItem $ml={15}>
            <UndoIcon />
          </TitleItem>
          <TitleItem $ml={8}>
            <Chevron />
          </TitleItem>
          <TitleItem $ml={13}>
            <RedoIcon />
          </TitleItem>
          <TitleItem $ml={7}>
            <Chevron c="#aaa" />
          </TitleItem>
          <TitleItem $ml={17}>
            <CustomizeIcon />
          </TitleItem>
          <DocTitle>Libro1  -  Excel</DocTitle>
        </TitleLeft>
        <SearchBox>
          <SearchIcon />
          Buscar
        </SearchBox>
        <TitleRight>
          <Avatar>JM</Avatar>
          <WinButton $w={60}>
            <Svg w={14} h={2}>
              <path d="M0 1h14" stroke="#333" />
            </Svg>
          </WinButton>
          <WinButton $w={58}>
            <Svg w={14}>
              <rect x=".5" y="2.5" width="10.5" height="11" rx="2" stroke="#333" />
              <path d="M3 .5h8a2.5 2.5 0 0 1 2.5 2.5v8" stroke="#333" />
            </Svg>
          </WinButton>
          <WinButton $w={50} $ml={6}>
            <XMark s={14} c="#333" w={1.6} />
          </WinButton>
        </TitleRight>
      </TitleBar>

      <TabRow>
        <Tab $mr={17}>Archivo</Tab>
        <Tab $active>Inicio</Tab>
        {tabs.map((t) => (
          <Tab key={t}>{t}</Tab>
        ))}
        <TabSpacer />
        <CommentButton>
          <CommentIcon />
          Comentarios
        </CommentButton>
        <ShareButton>
          <ShareIcon />
          Compartir
          <Chevron c="#fff" />
        </ShareButton>
      </TabRow>

      <Ribbon>
        <Clipboard />
        <FontGroup />
        <AlignGroup />
        <NumberGroup />
        <StylesGroup />
        <CellsGroup />
        <EditGroup />
        <BigGroup w={126} icon={<AddinsIcon />} lines={["Complementos"]} label="Complementos" />
        <BigGroup w={79} icon={<AnalyzeIcon />} lines={["Analizar", "datos"]} label="" />
        <BigGroup w={140} top={7} icon={<AdobeIcon />} lines={["Crear y compartir", "PDF de Adobe"]} label="Adobe Acrobat" />
        <Group $last>
          <GroupBody />
          <GroupFoot>
            <GroupLabel>
              <Chevron s={13} />
            </GroupLabel>
          </GroupFoot>
        </Group>
      </Ribbon>

      <FormulaBar>
        <FormulaBox $w={126} $pad="0 8px">
          <BoxText>B1</BoxText>
          <Chevron s={12} c="#444" />
        </FormulaBox>
        <Dots>
          <i />
          <i />
          <i />
        </Dots>
        <FormulaBox $w={105} $pad="0 3px 0 7px">
          <XMark s={16} />
          <Svg w={16} vb="0 0 20 20">
            <path d="M1 10l6 7L19 3" stroke="#aaa" strokeWidth="1.5" />
          </Svg>
          <FxText>fx</FxText>
          <Chevron s={12} c="#999" />
        </FormulaBox>
        <FormulaBox $pad="0 8px 0 12px" $ml={6}>
          <BoxText>Configuración del servidor</BoxText>
          <Chevron s={12} c="#444" />
        </FormulaBox>
      </FormulaBar>

      <Sheet>
        <GridArea>
          <HeadRow>
            <Corner />
            {columns.map((c) => (
              <ColHead key={c.name} $w={c.w} $on={c.on}>
                {c.name}
              </ColHead>
            ))}
          </HeadRow>
          {rows.map((text, r) => (
            <Row key={r}>
              <RowHead>{r + 1}</RowHead>
              {columns.map((c, i) => (
                <Cell
                  key={c.name}
                  $w={c.w}
                  $sel={c.on && r > 0}
                  $spill={i >= 2 && i < 2 + (spills[r] || 0)}
                >
                  {c.on && text && <CellText>{text}</CellText>}
                </Cell>
              ))}
            </Row>
          ))}
          <Selection />
        </GridArea>
        <VScroll>
          <ArrowUp />
          <VThumb />
          <ArrowDown />
        </VScroll>
      </Sheet>

      <TabBar>
        <SheetNav $w={30} $ml={21}>
          <Svg w={8} h={14}>
            <path d="M7 1L1 7l6 6" stroke="#999" strokeWidth="1.2" />
          </Svg>
        </SheetNav>
        <SheetNav $w={30} $ml={10}>
          <Svg w={8} h={14}>
            <path d="M1 1l6 6-6 6" stroke="#999" strokeWidth="1.2" />
          </Svg>
        </SheetNav>
        <SheetTab>Hoja1</SheetTab>
        <SheetRule />
        <SheetNav $w={30} $ml={44}>
          <Svg w={14}>
            <path d="M7 0v14M0 7h14" stroke="#333" strokeWidth="1.4" />
          </Svg>
        </SheetNav>
        <TabDots>
          <i />
          <i />
          <i />
        </TabDots>
        <HScroll>
          <ArrowLeft />
          <HThumb />
          <ArrowRight />
        </HScroll>
      </TabBar>

      <StatusBar>
        Listo
        <StatusIcon $ml={24}>
          <MacroIcon />
        </StatusIcon>
        <StatusIcon $ml={24}>
          <AccessIcon />
        </StatusIcon>
        <StatusIcon $ml={2}>Accesibilidad: todo correcto</StatusIcon>
        <StatusRight>
          <Recount>Recuento: 25</Recount>
          <ViewButton $on>
            <NormalViewIcon />
          </ViewButton>
          <ViewButton>
            <PageViewIcon />
          </ViewButton>
          <ViewButton>
            <BreakViewIcon />
          </ViewButton>
          <ZoomMinus>
            <Svg w={10} h={2}>
              <path d="M0 1h10" stroke="#333" />
            </Svg>
          </ZoomMinus>
          <ZoomTrack />
          <Svg w={12}>
            <path d="M6 0v12M0 6h12" stroke="#333" />
          </Svg>
          <ZoomValue>100 %</ZoomValue>
        </StatusRight>
      </StatusBar>

      <Dropdown>
        <DropItem>
          <DropSigma>
            <SigmaIcon />
          </DropSigma>
          <span>
            S<u>u</u>ma
          </span>
        </DropItem>
        <DropItem>
          <span>
            <u>P</u>romedio
          </span>
        </DropItem>
        <DropItem>
          <span>
            <u>C</u>ontar números
          </span>
        </DropItem>
        <DropItem>
          <span>
            Má<u>x</u>
          </span>
        </DropItem>
        <DropItem>
          <span>
            <u>M</u>ín
          </span>
        </DropItem>
        <DropRule />
        <DropLast>
          <span>
            Más <u>f</u>unciones...
          </span>
        </DropLast>
      </Dropdown>

      <InicioMark />
      <SumMark />
      <MoreMark />
    </Page>
  );
}
